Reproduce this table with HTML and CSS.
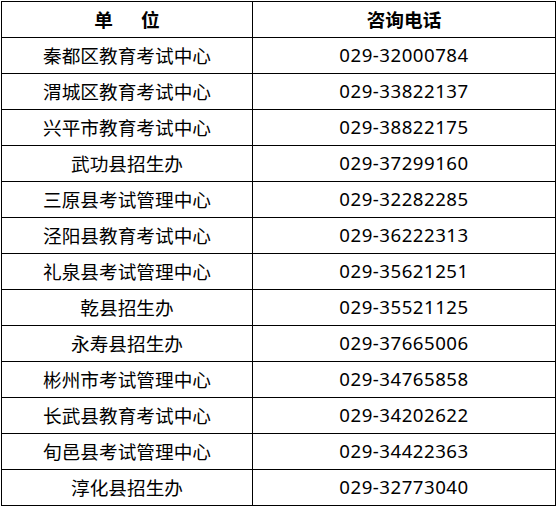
FILE: index.html
```html
<!DOCTYPE html>
<html lang="zh-CN">
<head>
<meta charset="utf-8">
<title>咨询电话</title>
<link rel="stylesheet" href="styles.css">
</head>
<body>
<table class="contacts">
  <colgroup>
    <col class="col-unit">
    <col class="col-phone">
  </colgroup>
  <thead>
    <tr><th>单&emsp;&ensp;位</th><th>咨询电话</th></tr>
  </thead>
  <tbody>
    <tr><td>秦都区教育考试中心</td><td class="num">029-32000784</td></tr>
    <tr><td>渭城区教育考试中心</td><td class="num">029-33822137</td></tr>
    <tr><td>兴平市教育考试中心</td><td class="num">029-38822175</td></tr>
    <tr><td>武功县招生办</td><td class="num">029-37299160</td></tr>
    <tr><td>三原县考试管理中心</td><td class="num">029-32282285</td></tr>
    <tr><td>泾阳县教育考试中心</td><td class="num">029-36222313</td></tr>
    <tr><td>礼泉县考试管理中心</td><td class="num">029-35621251</td></tr>
    <tr><td>乾县招生办</td><td class="num">029-35521125</td></tr>
    <tr><td>永寿县招生办</td><td class="num">029-37665006</td></tr>
    <tr><td>彬州市考试管理中心</td><td class="num">029-34765858</td></tr>
    <tr><td>长武县教育考试中心</td><td class="num">029-34202622</td></tr>
    <tr><td>旬邑县考试管理中心</td><td class="num">029-34422363</td></tr>
    <tr><td>淳化县招生办</td><td class="num">029-32773040</td></tr>
  </tbody>
</table>
</body>
</html>
```
FILE: styles.css
```css
html, body {
  margin: 0;
  padding: 0;
  background: #ffffff;
}

body {
  padding: 1px 0 0 1px;
  font-family: "Noto Sans CJK SC", "Noto Sans", sans-serif;
  color: #000000;
}

.contacts {
  border-collapse: separate;
  border-spacing: 0;
  table-layout: fixed;
  width: 555px;
  border-top: 1px solid #000000;
  border-left: 1px solid #000000;
}

.col-unit { width: 251px; }
.col-phone { width: 303px; }

.contacts th,
.contacts td {
  border-right: 1px solid #000000;
  border-bottom: 1px solid #000000;
  height: 35px;
  padding: 0;
  text-align: center;
  vertical-align: middle;
  font-size: 18.67px;
  line-height: 1;
}

.contacts th {
  font-weight: bold;
}

.contacts .num {
  font-family: "Noto Sans", "Noto Sans CJK SC", sans-serif;
  letter-spacing: 0.5px;
}
```
